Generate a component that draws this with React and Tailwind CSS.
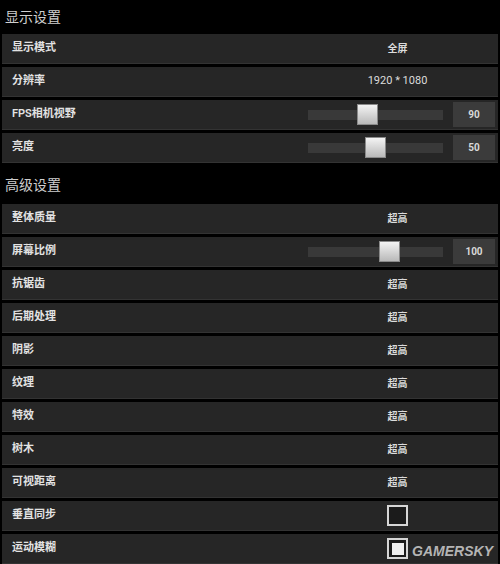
const font = { fontFamily: 'Roboto, "Noto Sans CJK SC", sans-serif' };

const display = [
  { label: "显示模式", type: "text", value: "全屏" },
  { label: "分辨率", type: "text", value: "1920 * 1080", plain: true },
  { label: "FPS相机视野", type: "slider", value: "90", pos: 49 },
  { label: "亮度", type: "slider", value: "50", pos: 57 },
];

const advanced = [
  { label: "整体质量", type: "text", value: "超高" },
  { label: "屏幕比例", type: "slider", value: "100", pos: 71 },
  { label: "抗锯齿", type: "text", value: "超高" },
  { label: "后期处理", type: "text", value: "超高" },
  { label: "阴影", type: "text", value: "超高" },
  { label: "纹理", type: "text", value: "超高" },
  { label: "特效", type: "text", value: "超高" },
  { label: "树木", type: "text", value: "超高" },
  { label: "可视距离", type: "text", value: "超高" },
  { label: "垂直同步", type: "check", value: false },
  { label: "运动模糊", type: "check", value: true },
];

function Control({ item }) {
  if (item.type === "slider") {
    return (
      <div className="flex items-center pl-[8px]">
        <div className="relative h-[10px] w-[135px] bg-[#393939]">
          <div
            className="absolute top-[-6px] h-[21px] w-[21px] border border-[#8a8a8a] bg-gradient-to-b from-[#f4f4f4] to-[#b9b9b9]"
            style={{ left: item.pos }}
          />
        </div>
        <div className="ml-[10px] flex h-[25px] w-[42px] items-center justify-center bg-[#3b3b3b] text-[10px] font-bold text-[#d8d8d8]">
          {item.value}
        </div>
      </div>
    );
  }
  if (item.type === "check") {
    return (
      <div className="flex justify-center">
        <div className="flex h-[21px] w-[21px] items-center justify-center border-2 border-[#d6d6d6] bg-[#1b1b1b]">
          {item.value && <div className="h-[12px] w-[12px] bg-[#efefef]" />}
        </div>
      </div>
    );
  }
  if (item.plain) {
    return (
      <div className="text-center text-[11px] text-[#dcdcdc]">{item.value}</div>
    );
  }
  return (
    <div className="text-center text-[10px] font-bold text-[#dcdcdc]">
      {item.value}
    </div>
  );
}

function Row({ item }) {
  return (
    <div className="mx-[2px] mb-[3px] flex h-[30px] items-center border-b border-[#333333] bg-[#262626]">
      <div className="flex-1 pl-[10px] text-[11px] font-semibold text-[#e2e2e2]">
        {item.label}
      </div>
      <div className="mr-[3px] w-[195px]">
        <Control item={item} />
      </div>
    </div>
  );
}

export default function App() {
  return (
    <div className="relative h-[564px] w-[500px] overflow-hidden bg-black" style={font}>
      <div className="flex h-[34px] items-center pl-[5px] text-[14px] text-[#cfcfcf]">
        显示设置
      </div>
      {display.map((item) => (
        <Row key={item.label} item={item} />
      ))}
      <div className="flex h-[38px] items-center pl-[5px] text-[14px] text-[#cfcfcf]">
        高级设置
      </div>
      {advanced.map((item) => (
        <Row key={item.label} item={item} />
      ))}
      <div
        className="absolute bottom-[2px] right-[7px] text-[14px] font-bold italic text-[#b4b4b4]"
        style={{ fontFamily: '"Liberation Sans", sans-serif' }}
      >
        GAMERSKY
      </div>
    </div>
  );
}
